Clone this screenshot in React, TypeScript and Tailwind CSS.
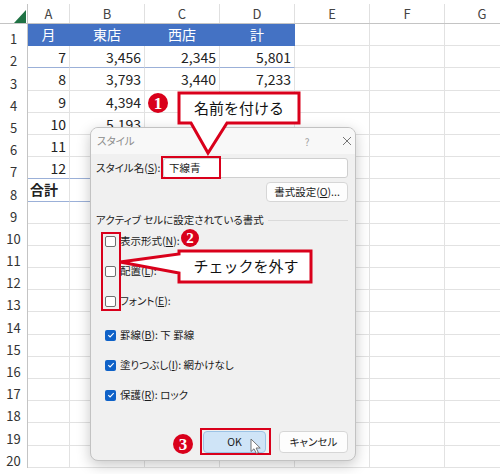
import React from 'react';

type Row = { a?: string; b?: string; c?: string; d?: string; kind?: 'head' | 'total' };

const rows: Row[] = [
  { a: '月', b: '東店', c: '西店', d: '計', kind: 'head' },
  { a: '7', b: '3,456', c: '2,345', d: '5,801' },
  { a: '8', b: '3,793', c: '3,440', d: '7,233' },
  { a: '9', b: '4,394' },
  { a: '10', b: '5,193' },
  { a: '11' },
  { a: '12' },
  { a: '合計', kind: 'total' },
];

const letters = ['A', 'B', 'C', 'D', 'E', 'F', 'G'];

// rows whose bottom edge carries the blue underline style
const blueBottom = [1, 6, 7];

function Check({ on }: { on?: boolean }) {
  if (on) {
    return (
      <span className="w-[11px] h-[11px] rounded-[2px] bg-[#0f62c8] flex items-center justify-center shrink-0">
        <svg width="8" height="8" viewBox="0 0 8 8">
          <path d="M1.3 4.2 L3.1 6 L6.7 2.2" fill="none" stroke="white" strokeWidth="1.1" />
        </svg>
      </span>
    );
  }
  return <span className="w-[11px] h-[11px] rounded-[2px] border border-[#6f6f6f] bg-white shrink-0" />;
}

function Sheet() {
  return (
    <div className="flex flex-col">
      <div className="h-[4px]" />
      {/* column letters */}
      <div className="flex h-[20px] border-b border-[#c4c4c4]">
        <div className="w-[28px] shrink-0 relative border-r border-[#c4c4c4]">
          <svg className="absolute left-[14px] top-[6px]" width="12" height="13" viewBox="0 0 12 13">
            <polygon points="12,0 12,13 0,13" fill="#1f7244" />
          </svg>
        </div>
        {letters.map((l, i) => (
          <div
            key={l}
            className={`${i === 0 ? 'w-[42px]' : 'w-[75px]'} shrink-0 border-r border-[#e0e0e0] flex items-center justify-center text-[13px] text-[#444]`}
          >
            {l}
          </div>
        ))}
      </div>
      {Array.from({ length: 20 }).map((_, r) => {
        const row = rows[r] ?? {};
        const head = row.kind === 'head';
        const blue = blueBottom.includes(r);
        const cell = (extra: string) =>
          `${extra} shrink-0 flex items-center border-r border-b ${
            head ? 'bg-[#4472c4] border-r-[#4472c4] border-b-[#4472c4] justify-center text-white' : 'border-r-[#e2e2e2]'
          } ${!head && blue ? 'border-b-[#9bb0d8]' : !head ? 'border-b-[#e2e2e2]' : ''}`;
        const plainCell = (w: string) => `${w} shrink-0 border-r border-b border-[#e2e2e2]`;
        return (
          <div key={r} className="flex h-[22.2px] text-[14px] text-[#222]">
            <div className="w-[28px] shrink-0 border-r border-[#c4c4c4] flex items-end justify-center pb-[1px] text-[13px] leading-none text-[#333]">
              {r + 1}
            </div>
            <div className={`${cell('w-[42px]')} ${row.kind === 'total' ? 'justify-start pl-[2px] font-bold' : head ? '' : 'justify-end pr-[3px] pt-[2px]'}`}>
              {row.a}
            </div>
            <div className={`${cell('w-[75px]')} ${head ? '' : 'justify-end pr-[3px] pt-[2px]'}`}>{row.b}</div>
            <div className={`${cell('w-[75px]')} ${head ? '' : 'justify-end pr-[3px] pt-[2px]'}`}>{row.c}</div>
            <div className={`${cell('w-[75px]')} ${head ? '' : 'justify-end pr-[3px] pt-[2px]'}`}>{row.d}</div>
            <div className={plainCell('w-[75px]')} />
            <div className={plainCell('w-[75px]')} />
            <div className={plainCell('w-[75px]')} />
          </div>
        );
      })}
    </div>
  );
}

function StyleDialog() {
  return (
    <div className="absolute left-[90px] top-[127px] w-[266px] h-[334px] rounded-[8px] border border-[#c2c2c2] bg-[#f0f0f0] shadow-[0_4px_14px_rgba(0,0,0,0.22)] flex flex-col overflow-hidden text-[10.5px] text-[#1b1b1b] [font-feature-settings:'palt']">
      <div className="h-[26px] shrink-0 bg-[#f8f8f8] flex items-center pl-[6px]">
        <span className="text-[#8c8c8c]">スタイル</span>
        <span className="ml-[170px] text-[#a0a0a0] text-[10px]">?</span>
        <svg className="ml-[33px]" width="10" height="10" viewBox="0 0 10 10">
          <path d="M1 1 L9 9 M9 1 L1 9" stroke="#666" strokeWidth="0.9" />
        </svg>
      </div>

      <div className="mt-[4px] h-[20px] flex items-center pl-[5px] pr-[7px]">
        <span>
          スタイル名(<u>S</u>):
        </span>
        <div className="ml-auto w-[185px] h-[20px] bg-white border border-[#cfcfcf] rounded-[3px] flex items-center pl-[5px]">
          下線青
        </div>
      </div>

      <div className="self-end mr-[7px] mt-[4px] w-[82px] h-[20px] bg-[#fdfdfd] border border-[#d6d6d6] rounded-[4px] flex items-center justify-center">
        書式設定(<u>O</u>)...
      </div>

      <div className="mt-[12px] h-[12px] flex items-center pl-[5px] pr-[7px]">
        <span>アクティブ セルに設定されている書式</span>
        <div className="flex-1 h-px bg-[#dadada] ml-[4px]" />
      </div>

      <div className="flex flex-col pl-[14px]">
        <div className="h-[30px] flex items-center gap-[4px]">
          <Check />
          <span>
            表示形式(<u>N</u>):
          </span>
        </div>
        <div className="h-[30px] flex items-center gap-[4px]">
          <Check />
          <span>
            配置(<u>L</u>):
          </span>
        </div>
        <div className="h-[30px] flex items-center gap-[4px]">
          <Check />
          <span>
            フォント(<u>E</u>):
          </span>
        </div>
        <div className="mt-[4px] h-[30px] flex items-center gap-[4px]">
          <Check on />
          <span>
            罫線(<u>B</u>): 下 罫線
          </span>
        </div>
        <div className="h-[30px] flex items-center gap-[4px]">
          <Check on />
          <span>
            塗りつぶし(<u>I</u>): 網かけなし
          </span>
        </div>
        <div className="h-[30px] flex items-center gap-[4px]">
          <Check on />
          <span>
            保護(<u>R</u>): ロック
          </span>
        </div>
      </div>

      <div className="mt-auto flex justify-end gap-[13px] pr-[7px] pb-[7px]">
        <div className="w-[63px] h-[22px] rounded-[4px] bg-[#cfe4f7] border border-[#9cc3e6] flex items-center justify-center">
          OK
        </div>
        <div className="w-[69px] h-[22px] rounded-[4px] bg-[#fdfdfd] border border-[#d6d6d6] flex items-center justify-center">
          キャンセル
        </div>
      </div>
    </div>
  );
}

function Annotations() {
  return (
    <>
      {/* red highlight frames */}
      <div className="absolute left-[161px] top-[156px] w-[60px] h-[23px] border-[2.5px] border-[#d9001b]" />
      <div className="absolute left-[101px] top-[232px] w-[20px] h-[79px] border-[2.5px] border-[#d9001b]" />
      <div className="absolute left-[200px] top-[428px] w-[71px] h-[27px] border-[2.5px] border-[#d9001b]" />

      {/* callout 1 */}
      <svg className="absolute left-[176px] top-[90px]" width="127" height="67" viewBox="0 0 127 67">
        <path d="M3 3 H123 V33 H51 L32 63 L15 33 H3 Z" fill="white" stroke="#d9001b" strokeWidth="3" />
      </svg>
      <div className="absolute left-[179px] top-[93px] w-[120px] h-[30px] flex items-center justify-center text-[15px] text-[#111]">
        名前を付ける
      </div>

      {/* callout 2 */}
      <svg className="absolute left-[117px] top-[248px]" width="198" height="38" viewBox="0 0 198 38">
        <path d="M62 3 H194 V34 H62 V25 L3 14 L62 6 Z" fill="white" stroke="#d9001b" strokeWidth="3" />
      </svg>
      <div className="absolute left-[180px] top-[251px] w-[132px] h-[31px] flex items-center justify-center text-[15px] text-[#111]">
        チェックを外す
      </div>

      {/* step numbers */}
      <div className="absolute left-[148px] top-[93px] w-[20px] h-[20px] rounded-full bg-[#d9001b] flex items-center justify-center text-white font-bold text-[17px] font-['Liberation_Serif',serif] leading-none">
        1
      </div>
      <div className="absolute left-[181px] top-[229px] w-[18px] h-[18px] rounded-full bg-[#d9001b] flex items-center justify-center text-white font-bold text-[15px] font-['Liberation_Serif',serif] leading-none">
        2
      </div>
      <div className="absolute left-[173px] top-[434px] w-[20px] h-[20px] rounded-full bg-[#d9001b] flex items-center justify-center text-white font-bold text-[17px] font-['Liberation_Serif',serif] leading-none">
        3
      </div>

      {/* mouse pointer */}
      <svg className="absolute left-[250px] top-[438px]" width="13" height="17" viewBox="0 0 13 17">
        <path d="M1 1 L1 13.5 L4 10.8 L6.4 15.5 L8.4 14.6 L6.1 10 L10.2 10 Z" fill="white" stroke="#666" strokeWidth="0.9" />
      </svg>
    </>
  );
}

export default function App() {
  return (
    <div className="relative w-[500px] h-[474px] overflow-hidden bg-white font-['Noto_Sans_CJK_JP',sans-serif]">
      <Sheet />
      <StyleDialog />
      <Annotations />
    </div>
  );
}
